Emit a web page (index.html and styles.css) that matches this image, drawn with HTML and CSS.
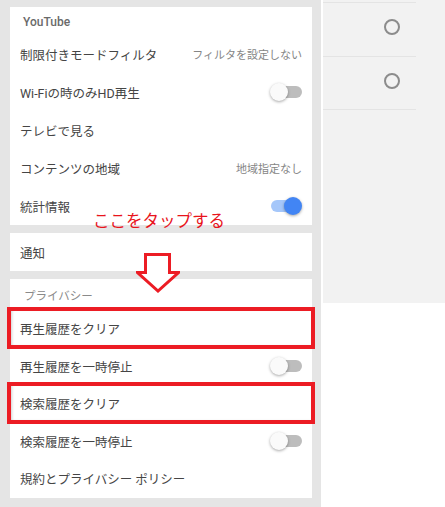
FILE: index.html
```html
<!DOCTYPE html>
<html lang="ja">
<head>
<meta charset="utf-8">
<title>設定</title>
<link rel="stylesheet" href="styles.css">
</head>
<body>
<div class="screen">
  <div class="settings">
    <section class="card">
      <div class="card-title">YouTube</div>
      <div class="row"><span>制限付きモードフィルタ</span><span class="value">フィルタを設定しない</span></div>
      <div class="row"><span>Wi-Fiの時のみHD再生</span><span class="switch"></span></div>
      <div class="row"><span>テレビで見る</span></div>
      <div class="row"><span>コンテンツの地域</span><span class="value">地域指定なし</span></div>
      <div class="row"><span>統計情報</span><span class="switch on"></span></div>
    </section>
    <section class="card">
      <div class="row"><span>通知</span></div>
    </section>
    <section class="card privacy">
      <div class="card-title">プライバシー</div>
      <div class="row marked"><span>再生履歴をクリア</span></div>
      <div class="row"><span>再生履歴を一時停止</span><span class="switch"></span></div>
      <div class="row marked"><span>検索履歴をクリア</span></div>
      <div class="row"><span>検索履歴を一時停止</span><span class="switch"></span></div>
      <div class="row"><span>規約とプライバシー ポリシー</span></div>
    </section>
    <div class="note">ここをタップする</div>
    <svg class="arrow" width="44" height="40" viewBox="0 0 44 40">
      <path d="M9.5 1.5 H33.5 V19.5 H42.5 L22 38 L1.5 19.5 H9.5 Z" fill="#fff" stroke="#ec1c24" stroke-width="3"/>
    </svg>
  </div>
  <div class="side">
    <div class="side-list">
      <div class="side-item"><span class="radio"></span></div>
      <div class="side-item"><span class="radio"></span></div>
    </div>
  </div>
</div>
</body>
</html>
```
FILE: styles.css
```css
html, body {
  margin: 0;
  padding: 0;
  background: #fff;
}
body {
  font-family: Roboto, "Noto Sans CJK JP", sans-serif;
}
.screen {
  display: flex;
  gap: 2px;
  width: 445px;
  height: 507px;
  overflow: hidden;
  align-items: flex-start;
}
.settings {
  position: relative;
  flex: none;
  width: 321px;
  height: 507px;
  box-sizing: border-box;
  padding: 7px 9px 0 10px;
  background: #e5e5e5;
  display: flex;
  flex-direction: column;
  gap: 8px;
}
.card {
  background: #fff;
}
.card-title {
  height: 28px;
  box-sizing: border-box;
  padding: 2px 0 0 13px;
  display: flex;
  align-items: center;
  font-size: 12px;
  font-weight: 500;
  color: #6a6a6a;
}
.privacy .card-title {
  height: 31px;
  padding: 0 0 0 14px;
  font-size: 11.5px;
  font-weight: 400;
  color: #8a8a8a;
}
.row {
  height: 38px;
  box-sizing: border-box;
  padding: 0 10px;
  display: flex;
  align-items: center;
  justify-content: space-between;
  font-size: 12.5px;
  color: #454545;
}
.privacy .row {
  height: 37.5px;
}
.value {
  font-size: 11px;
  color: #858585;
}
.marked {
  position: relative;
  box-shadow: inset 3px 0 3px -1px rgba(0, 0, 0, 0.18), inset 0 -3px 3px -1px rgba(0, 0, 0, 0.12);
}
.marked::after {
  content: "";
  position: absolute;
  left: -3px;
  right: -3px;
  top: -3px;
  bottom: -1px;
  border: 4px solid #ec1c24;
}
.switch {
  position: relative;
  flex: none;
  width: 32px;
  height: 18px;
}
.switch::before {
  content: "";
  position: absolute;
  left: 3px;
  right: 0;
  top: 3px;
  height: 12px;
  border-radius: 6px;
  background: #bdbdbd;
}
.switch::after {
  content: "";
  position: absolute;
  left: 0;
  top: 0;
  width: 18px;
  height: 18px;
  border-radius: 50%;
  background: #fafafa;
  box-shadow: 0 1px 3px rgba(0, 0, 0, 0.35);
}
.switch.on::before {
  background: #a5c7fa;
  left: 1px;
  right: 3px;
}
.switch.on::after {
  left: auto;
  right: 0;
  background: #4285f4;
}
.note {
  position: absolute;
  left: 93px;
  top: 210px;
  font-family: "Noto Sans CJK JP", sans-serif;
  font-size: 16.5px;
  line-height: 20px;
  color: #e8141c;
  white-space: nowrap;
}
.arrow {
  position: absolute;
  left: 136px;
  top: 253px;
}
.side {
  flex: none;
  width: 122px;
  height: 303px;
  box-sizing: border-box;
  padding-top: 2px;
  background: #f2f2f2;
}
.side-list {
  width: 93px;
}
.side-item {
  height: 54px;
  box-sizing: border-box;
  border-top: 1px solid #e4e4e4;
  padding: 16px 16px 0 0;
  display: flex;
  justify-content: flex-end;
  align-items: flex-start;
}
.side-item:last-child {
  border-bottom: 1px solid #e4e4e4;
}
.radio {
  width: 12px;
  height: 12px;
  border: 2px solid #8c8c8c;
  border-radius: 50%;
}
```
